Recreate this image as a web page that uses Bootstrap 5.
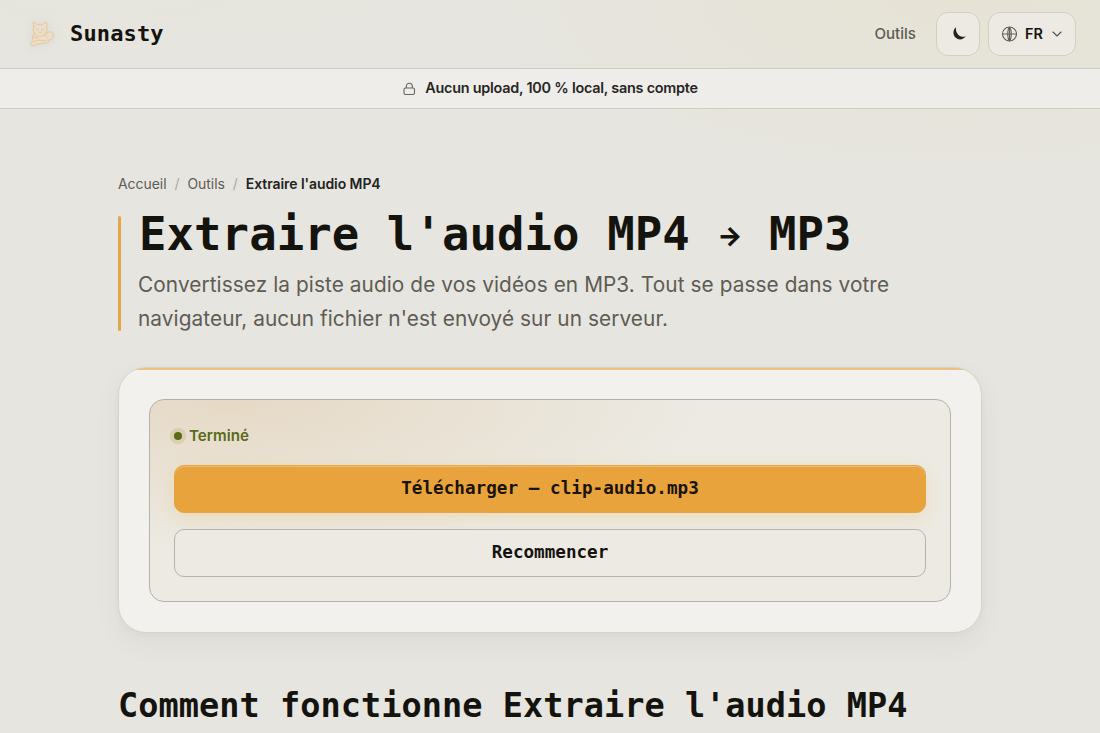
<!DOCTYPE html>
<html lang="fr">
<head>
<meta charset="utf-8">
<meta name="viewport" content="width=device-width, initial-scale=1">
<title>Extraire l'audio MP4 → MP3 | Sunasty</title>
<link href="https://cdn.jsdelivr.net/npm/bootstrap@5.3.0/dist/css/bootstrap.min.css" rel="stylesheet">
<style>
:root{--ink:#14130e;--muted:#5e5c54;--amber:#e8a33d}
body{height:733px;overflow:hidden;color:var(--ink);font-family:Inter,"Liberation Sans",sans-serif;
 background:radial-gradient(ellipse 540px 210px at 960px 0,rgba(232,214,150,.15),transparent 95%),radial-gradient(ellipse 460px 70px at 100px 0,rgba(236,230,190,.1),transparent),#e6e5e0}
.mono-face{font-family:"DejaVu Sans Mono","Liberation Mono",monospace;font-weight:700}
.site-head{height:69px;border-bottom:1px solid #cfcdc6;padding:0 24px}
.site-name{font-size:22px;letter-spacing:.13px;line-height:32px}
.site-logo{margin-right:12px;filter:drop-shadow(0 0 5px rgba(190,200,205,.4))}
.head-link{font-size:15.1px;font-weight:500;color:var(--muted);text-decoration:none;margin-right:20px}
.tool-btn{height:44px;border:1px solid #d2cfc6;border-radius:12px;background:#eceae3;color:var(--ink)}
.tool-moon{width:44px;margin-right:8px}
.tool-lang{width:88px;font-size:14.4px;font-weight:600}
.trust-strip{height:40px;border-bottom:1px solid #cfcdc6;background:#eeede9;font-size:14.4px;letter-spacing:-.23px;font-weight:600;color:#26251f;padding-bottom:2px}
.trust-strip svg{margin-right:9px;margin-top:2px}
.page-body{width:864px;padding-top:63px}
.crumbs{font-size:14px;letter-spacing:-.06px;line-height:24px;color:var(--muted);gap:8px;margin-bottom:20px}
.crumbs .sep{color:#aaa8a0}
.crumbs strong{color:#24231d;font-weight:600;letter-spacing:-.08px}
.hero{height:115px;margin-bottom:37px}
.hero-bar{width:3px;border-radius:2px;background:#e3a549;margin-right:17px}
.hero h1{font-size:45.6px;letter-spacing:.09px;line-height:46px;margin:-4px 0 10px 1px;white-space:nowrap}
.hero h1 .to{display:inline-block;width:24px;font-family:Inter,sans-serif;font-weight:800;font-size:26.5px;line-height:30px;text-align:center;letter-spacing:0;vertical-align:5px}
.hero p{font-size:20.8px;letter-spacing:.08px;line-height:34px;color:var(--muted);margin:0;white-space:nowrap}
.tool-card{height:266px;margin-top:-1px;border:1px solid #d5d3cb;border-radius:28px;background:linear-gradient(#ecc080,#ecc080) 0 1px/100% 2px no-repeat border-box,#f2f1ed;padding:31px 30px 30px;box-shadow:0 10px 26px rgba(70,65,40,.06),0 2px 6px rgba(70,65,40,.03)}
.result{height:203px;border:1px solid #b5b1a6;border-radius:15px;padding:24px;background:radial-gradient(ellipse 480px 150px at 80px 0,rgba(211,165,105,.24),transparent),#eceae3}
.done{font-size:15.2px;font-weight:600;color:#596b18;line-height:24px;gap:7px;margin-bottom:17px}
.done-dot{width:8px;height:8px;border-radius:50%;background:#586c17;box-shadow:0 0 0 4px rgba(190,155,90,.25)}
.act{height:48px;border-radius:10px;border:1px solid #b5b3ab;font-size:17.6px;background:#eceae3;color:var(--ink);padding:0 0 2px}
.act-main{background:#e8a33d;border-color:#e6a443;margin-bottom:16px;color:#1b1304;letter-spacing:.04px;box-shadow:inset 0 1px 0 #efbd71,0 6px 18px rgba(232,175,65,.2)}
.how{font-size:33.6px;line-height:44px;letter-spacing:.03px;margin:51px 0 0;white-space:nowrap}
</style>
</head>
<body>
<header class="site-head d-flex align-items-center">
 <svg class="site-logo" width="34" height="34" viewBox="0 0 34 34" fill="none" stroke="#ebc48e" stroke-width=".9" stroke-linejoin="round" stroke-linecap="round">
  <path fill="#e9dfcc" d="M10 9.500 9 5l4.500 2.500h5L22.500 5l.5 5c.5 4-1 6-3 8l4 3c2 2 1 4-1 5l-10 1-4 2c-3 0-3-3-1-4l1-7 2-2c-2-2-2.500-4-1-6.500z"/>
  <path fill="#e9dfcc" d="M22 17c1-3 6-3 7 0 1.500 3-1 6-4.500 6"/>
  <path d="m12 12 2.500 1m5.500-1-2.500 1m-2.500 2 1.200.8 1.200-.8M11 18c3 2 6 2 9 0M9 25l6-2 5 1 3-1M9 20l5 1"/>
 </svg>
 <span class="site-name mono-face">Sunasty</span>
 <nav class="d-flex align-items-center ms-auto">
  <a class="head-link" href="#">Outils</a>
  <button class="tool-btn tool-moon d-flex align-items-center justify-content-center p-0" aria-label="Thème">
   <svg width="16" height="16" viewBox="-1 0 16 16"><path fill="#24231d" d="M5 1.300C1.800 3.700 1.600 8.800 4.500 11.600c3 2.900 8 2.300 10.300-1.300-2.600 1.100-5.500.5-7.500-1.500C5.300 6.800 4.500 4 5 1.300z"/></svg>
  </button>
  <button class="tool-btn tool-lang d-flex align-items-center justify-content-center p-0">
   <svg width="16" height="16" viewBox="0 0 16 16" fill="none" stroke="#605e56" stroke-width="1.1"><circle cx="8.500" cy="8" r="7"/><path d="M1.500 8h14M8.500 1v14M8.500 1c-2.300 2.500-2.300 11.500 0 14M8.500 1c2.300 2.500 2.300 11.500 0 14"/></svg>
   <span class="mx-2">FR</span>
   <svg width="12" height="12" viewBox="0 0 12 12" fill="none" stroke="#504e47" stroke-width="1.1" stroke-linecap="round"><path d="m2 4 4 4 4-4"/></svg>
  </button>
 </nav>
</header>
<div class="trust-strip d-flex align-items-center justify-content-center">
 <svg width="14" height="14" viewBox="0 0 14 14" fill="none" stroke="#66645d" stroke-width="1.1"><rect x="2" y="6" width="10.500" height="6.500" rx="1.500"/><path d="M4.300 6V4.300a3 3 0 0 1 6 0V6"/></svg>
 <span>Aucun upload, 100 % local, sans compte</span>
</div>
<main class="page-body mx-auto">
 <nav class="crumbs d-flex"><span>Accueil</span><span class="sep">/</span><span>Outils</span><span class="sep">/</span><strong>Extraire l'audio MP4</strong></nav>
 <section class="hero d-flex">
  <div class="hero-bar"></div>
  <div>
   <h1 class="mono-face">Extraire l'audio MP4 <span class="to">→</span> MP3</h1>
   <p>Convertissez la piste audio de vos vidéos en MP3. Tout se passe dans votre<br>navigateur, aucun fichier n'est envoyé sur un serveur.</p>
  </div>
 </section>
 <section class="tool-card">
  <div class="result">
   <div class="done d-flex align-items-center"><span class="done-dot"></span>Terminé</div>
   <button class="act act-main mono-face w-100 d-block">Télécharger — clip-audio.mp3</button>
   <button class="act mono-face w-100 d-block">Recommencer</button>
  </div>
 </section>
 <h2 class="how mono-face">Comment fonctionne Extraire l'audio MP4</h2>
</main>
<script src="https://cdn.jsdelivr.net/npm/bootstrap@5.3.0/dist/js/bootstrap.bundle.min.js"></script>
</body>
</html>
